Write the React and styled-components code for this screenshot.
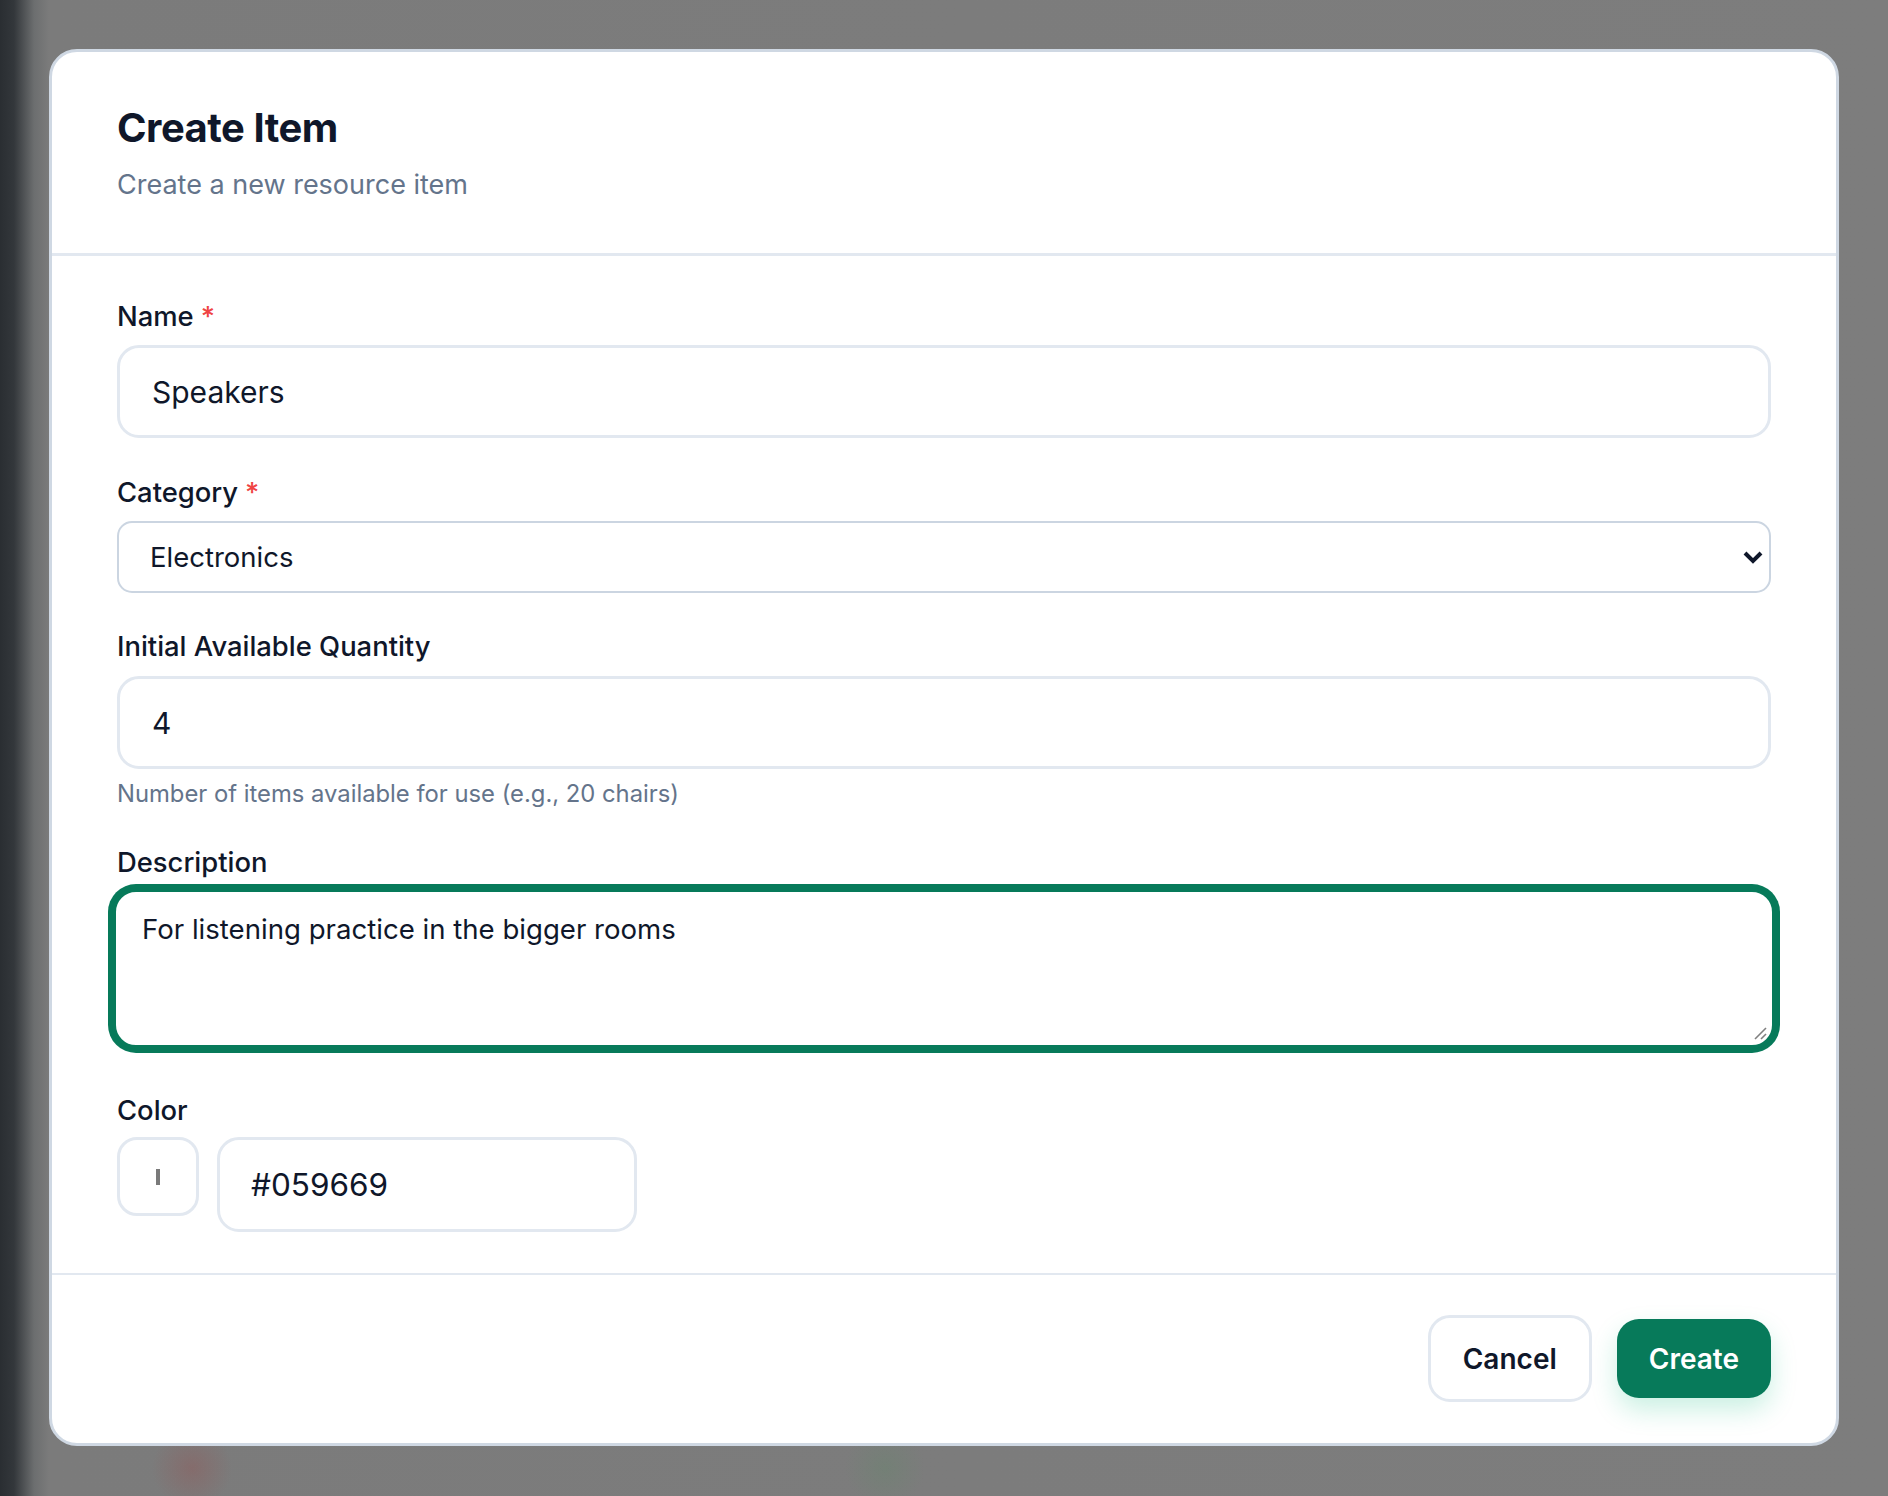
import React from "react";
import styled, { createGlobalStyle } from "styled-components";

const GlobalStyle = createGlobalStyle`
  html, body {
    margin: 0;
    padding: 0;
  }
  body {
    font-family: Inter, "Noto Sans", "Liberation Sans", sans-serif;
    color: #0f172a;
    -webkit-font-smoothing: antialiased;
  }
  * {
    box-sizing: border-box;
  }
`;

const Backdrop = styled.div`
  min-height: 1496px;
  padding: 49px;
  background:
    radial-gradient(circle at 192px 1468px, rgba(150, 80, 80, 0.35), transparent 40px),
    radial-gradient(circle at 885px 1468px, rgba(90, 140, 100, 0.25), transparent 40px),
    linear-gradient(90deg, #2a2e32 0px, #33373b 14px, #6c6e6f 34px, #7b7b7b 49px, #7d7d7d 100%);
`;

const Modal = styled.div`
  width: 1790px;
  background: #ffffff;
  border: 3px solid #cfd8e3;
  border-radius: 28px;
  overflow: hidden;
`;

const Header = styled.header`
  padding: 52px 65px 50px;
  border-bottom: 3px solid #e2e8f0;
`;

const Title = styled.h2`
  margin: 0;
  font-size: 40px;
  line-height: 48px;
  font-weight: 700;
  letter-spacing: -0.5px;
  color: #0f172a;
`;

const Subtitle = styled.p`
  margin: 15px 0 0;
  font-size: 27px;
  line-height: 36px;
  color: #64748b;
`;

const Body = styled.div`
  padding: 42px 65px 41px;
  display: flex;
  flex-direction: column;
`;

const Field = styled.div`
  display: flex;
  flex-direction: column;
  margin-top: ${(p) => p.$top || 0}px;
`;

const Label = styled.label`
  font-size: 27.4px;
  line-height: 36px;
  font-weight: 500;
  color: #0f172a;
  margin-bottom: ${(p) => p.$gap || 11}px;
`;

const Required = styled.span`
  color: #ef4444;
  margin-left: 7px;
`;

const TextInput = styled.input`
  width: 100%;
  height: 93px;
  padding: 0 32px;
  border: 3px solid #e2e8f0;
  border-radius: 22px;
  font-family: inherit;
  font-size: 30px;
  color: #0f172a;
  background: #fff;
  outline: none;
`;

const SelectWrap = styled.div`
  position: relative;
  height: 72px;
`;

const Select = styled.select`
  appearance: none;
  -webkit-appearance: none;
  width: 100%;
  height: 72px;
  padding: 0 60px 0 31px;
  border: 2px solid #cbd5e1;
  border-radius: 15px;
  background: #fff;
  font-family: inherit;
  font-size: 27.5px;
  color: #0f172a;
  outline: none;
`;

const Chevron = styled.svg`
  position: absolute;
  right: 7px;
  top: 29px;
  pointer-events: none;
`;

const Help = styled.p`
  margin: 10px 0 0;
  font-size: 23.8px;
  line-height: 30px;
  color: #64748b;
`;

const AreaWrap = styled.div`
  position: relative;
  margin: 0 -5px;
`;

const TextArea = styled.textarea`
  display: block;
  width: 100%;
  height: 161px;
  padding: 19px 26px;
  border: 4px solid #077a5a;
  border-radius: 24px;
  box-shadow: 0 0 0 4px #077a5a;
  font-family: inherit;
  font-size: 27.6px;
  line-height: 36px;
  color: #0f172a;
  resize: none;
  outline: none;
`;

const Grip = styled.svg`
  position: absolute;
  right: 8px;
  bottom: 8px;
  pointer-events: none;
`;

const ColorRow = styled.div`
  display: flex;
  align-items: flex-start;
  gap: 18px;
`;

const Swatch = styled.div`
  width: 82px;
  height: 79px;
  border: 3px solid #e2e8f0;
  border-radius: 20px;
  display: flex;
  align-items: center;
  justify-content: center;
  background: #fff;
`;

const SwatchBar = styled.span`
  width: 4px;
  height: 16px;
  background: #7a7a7a;
`;

const HexInput = styled(TextInput)`
  width: 420px;
  height: 95px;
  font-size: 31.5px;
  padding: 0 31px;
`;

const Footer = styled.footer`
  border-top: 2px solid #e2e8f0;
  padding: 40px 65px 41px;
  display: flex;
  justify-content: flex-end;
  align-items: center;
  gap: 25px;
`;

const Button = styled.button`
  font-family: inherit;
  font-size: 28px;
  font-weight: 600;
  border-radius: 22px;
  cursor: pointer;
  height: ${(p) => (p.$primary ? 79 : 87)}px;
  padding: 0 ${(p) => (p.$primary ? 32 : 32)}px;
  color: ${(p) => (p.$primary ? "#ffffff" : "#0f172a")};
  background: ${(p) => (p.$primary ? "#077a5a" : "#ffffff")};
  border: ${(p) => (p.$primary ? "none" : "3px solid #e2e8f0")};
  box-shadow: ${(p) =>
    p.$primary ? "0 12px 26px rgba(16, 185, 129, 0.22)" : "none"};
`;

export default function App() {
  return (
    <>
      <GlobalStyle />
      <Backdrop>
        <Modal>
          <Header>
            <Title>Create Item</Title>
            <Subtitle>Create a new resource item</Subtitle>
          </Header>
          <Body>
            <Field>
              <Label>
                Name<Required>*</Required>
              </Label>
              <TextInput defaultValue="Speakers" />
            </Field>

            <Field $top={36}>
              <Label>
                Category<Required>*</Required>
              </Label>
              <SelectWrap>
                <Select defaultValue="electronics">
                  <option value="electronics">Electronics</option>
                  <option value="furniture">Furniture</option>
                </Select>
                <Chevron width="22" height="14" viewBox="0 0 22 14">
                  <polyline
                    points="3,3 11,11 19,3"
                    fill="none"
                    stroke="#0f172a"
                    strokeWidth="4"
                  />
                </Chevron>
              </SelectWrap>
            </Field>

            <Field $top={35}>
              <Label $gap={12}>Initial Available Quantity</Label>
              <TextInput defaultValue="4" />
              <Help>Number of items available for use (e.g., 20 chairs)</Help>
            </Field>

            <Field $top={35}>
              <Label $gap={8}>Description</Label>
              <AreaWrap>
                <TextArea defaultValue="For listening practice in the bigger rooms" />
                <Grip width="16" height="16" viewBox="0 0 16 16">
                  <line x1="3" y1="14" x2="14" y2="3" stroke="#808080" strokeWidth="1.6" />
                  <line x1="9" y1="14" x2="14" y2="9" stroke="#808080" strokeWidth="1.6" />
                </Grip>
              </AreaWrap>
            </Field>

            <Field $top={43}>
              <Label $gap={9}>Color</Label>
              <ColorRow>
                <Swatch>
                  <SwatchBar />
                </Swatch>
                <HexInput defaultValue="#059669" />
              </ColorRow>
            </Field>
          </Body>
          <Footer>
            <Button>Cancel</Button>
            <Button $primary>Create</Button>
          </Footer>
        </Modal>
      </Backdrop>
    </>
  );
}
